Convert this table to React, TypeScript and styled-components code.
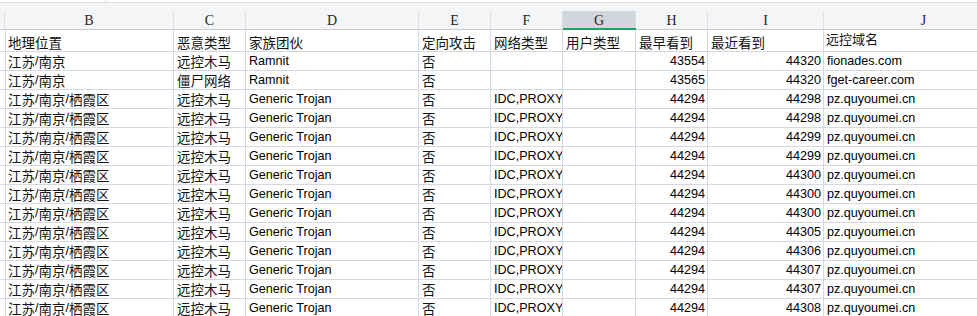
import React from "react";
import styled, { createGlobalStyle, css } from "styled-components";

const Global = createGlobalStyle`
  html, body { margin: 0; padding: 0; background: #ffffff; overflow: hidden; }
  #root { width: 977px; height: 316px; overflow: hidden; }
`;

const GRID = "5px 169px 72px 173px 72px 72px 73px 72px 116px 200px";
const LINE = "#d3d8e3";

const Page = styled.div`
  width: 977px;
  height: 316px;
  overflow: hidden;
  background: #ffffff;
  font-family: "Liberation Sans", Arial, "Noto Sans CJK SC", sans-serif;
`;

const TopBar = styled.div`
  height: 11px;
  background: #f4f5f7;
  display: flex;
  flex-direction: column;
`;

const TopEdge = styled.div`
  height: 2px;
  background: #ffffff;
  border-bottom: 1px solid #d9dce1;
  display: flex;
`;

const Tab = styled.div`
  width: 105px;
  height: 100%;
  border-right: 1px solid #d9dce1;
  border-bottom-right-radius: 3px;
  background: #ffffff;
`;

const ColHeader = styled.div`
  display: grid;
  grid-template-columns: ${GRID};
  height: 19px;
  box-sizing: border-box;
  background: #f4f5f7;
  border-bottom: 1px solid #c8ccd3;
`;

const Letter = styled.div<{ $active?: boolean }>`
  position: relative;
  height: 18px;
  box-sizing: border-box;
  border-right: 1px solid #dcdfe4;
  display: flex;
  align-items: center;
  justify-content: center;
  font-family: "Liberation Serif", "DejaVu Serif", serif;
  font-size: 14px;
  color: #262626;
  padding-top: 2px;
  ${(p) =>
    p.$active &&
    css`
      background: #d3d6dc;
      &::after {
        content: "";
        position: absolute;
        left: 0;
        right: -1px;
        bottom: -1px;
        height: 2px;
        background: #21a366;
      }
    `}
`;

const Row = styled.div<{ $h: number }>`
  display: grid;
  grid-template-columns: ${GRID};
  height: ${(p) => p.$h}px;
`;

const Cell = styled.div<{ $right?: boolean; $mid?: boolean }>`
  box-sizing: border-box;
  border-right: 1px solid ${LINE};
  border-bottom: 1px solid ${LINE};
  display: flex;
  align-items: ${(p) => (p.$mid ? "center" : "flex-end")};
  justify-content: ${(p) => (p.$right ? "flex-end" : "flex-start")};
  padding: ${(p) => (p.$mid ? "0 2px 3px 2px" : "0 2px 1px 3px")};
  overflow: hidden;
  white-space: nowrap;
  font-size: 12.6px;
  line-height: 16px;
  color: #000000;
`;

const Han = styled.span<{ $small?: boolean }>`
  font-family: "Noto Sans CJK SC", "Noto Sans CJK TC", sans-serif;
  font-size: ${(p) => (p.$small ? "13px" : "13.5px")};
  line-height: 16px;
  color: #141414;
`;

const renderText = (t: string, small?: boolean) =>
  t.split(/([\u4e00-\u9fff]+)/).map((part, i) =>
    i % 2 === 1 ? (
      <Han key={i} $small={small}>
        {part}
      </Han>
    ) : (
      <React.Fragment key={i}>{part}</React.Fragment>
    )
  );

const letters = ["", "B", "C", "D", "E", "F", "G", "H", "I", "J"];

type Rec = string[];

const head: Rec = ["地理位置", "恶意类型", "家族团伙", "定向攻击", "网络类型", "用户类型", "最早看到", "最近看到", "远控域名"];

const lastSeen = ["44298", "44298", "44299", "44299", "44300", "44300", "44300", "44305", "44306", "44307", "44307", "44308"];

const rows: Rec[] = [
  ["江苏/南京", "远控木马", "Ramnit", "否", "", "", "43554", "44320", "fionades.com"],
  ["江苏/南京", "僵尸网络", "Ramnit", "否", "", "", "43565", "44320", "fget-career.com"],
  ...lastSeen.map((v) => ["江苏/南京/栖霞区", "远控木马", "Generic Trojan", "否", "IDC,PROXY", "", "44294", v, "pz.quyoumei.cn"]),
];

export default function App() {
  return (
    <Page>
      <Global />
      <TopBar>
        <TopEdge>
          <Tab />
        </TopEdge>
      </TopBar>
      <ColHeader>
        {letters.map((l, i) => (
          <Letter key={i} $active={l === "G"}>
            {l}
          </Letter>
        ))}
      </ColHeader>
      <Row $h={22}>
        <Cell />
        {head.map((h, i) => (
          <Cell key={i} $mid={i === 8}>
            {renderText(h, i === 8)}
          </Cell>
        ))}
      </Row>
      {rows.map((r, ri) => (
        <Row key={ri} $h={19}>
          <Cell />
          {r.map((v, ci) => (
            <Cell key={ci} $right={ci === 6 || ci === 7}>
              {renderText(v)}
            </Cell>
          ))}
        </Row>
      ))}
    </Page>
  );
}
